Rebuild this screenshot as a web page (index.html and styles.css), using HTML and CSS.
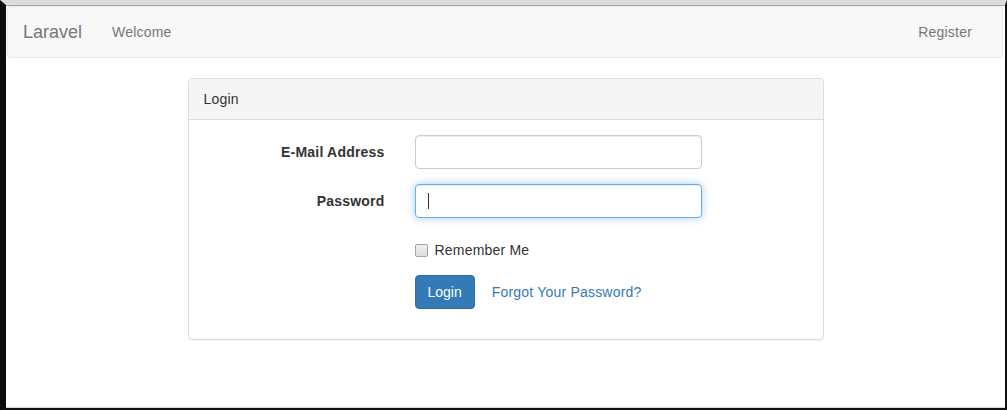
FILE: index.html
```html
<!DOCTYPE html>
<html lang="en">
<head>
    <meta charset="UTF-8">
    <meta name="viewport" content="width=device-width, initial-scale=1.0">
    <title>Laravel</title>

    <link rel="stylesheet" href="styles.css">
</head>
<body>

<div class="frame">
    <nav class="navbar">
        <a class="brand" href="#">Laravel</a>
        <a class="nav-link" href="#">Welcome</a>
        <a class="nav-link nav-right" href="#">Register</a>
    </nav>

    <div class="panel">
        <div class="panel-heading">Login</div>
        <div class="panel-body">
            <form class="login-form">
                <label class="form-label" for="email">E-Mail Address</label>
                <input type="email" id="email" class="form-control">

                <label class="form-label" for="password">Password</label>
                <div class="input-wrap">
                    <input type="password" id="password" class="form-control focused">
                    <span class="caret"></span>
                </div>

                <label class="checkbox">
                    <input type="checkbox" name="remember"> Remember Me
                </label>

                <div class="actions">
                    <button type="button" class="btn-primary">Login</button>
                    <a class="btn-link" href="#">Forgot Your Password?</a>
                </div>
            </form>
        </div>
    </div>
</div>

</body>
</html>
```

FILE: styles.css
```css
html, body {
    margin: 0;
    height: 100%;
}

body {
    font-family: 'Liberation Sans', Arial, sans-serif;
    font-size: 14px;
    line-height: 20px;
    letter-spacing: 0.2px;
    color: #333;
    background: #fff;
}

.frame {
    box-sizing: border-box;
    height: 410px;
    border-left: 6px solid #0d0d0d;
    border-right: 2px solid #111;
    border-top: 5px solid #dcdcdc;
    border-bottom: 2px solid #111;
    background: #fff;
    box-shadow: inset 0 1px 0 #a6a6a6, inset 0 -1px 0 #d9d9d9;
}

.navbar {
    display: flex;
    align-items: center;
    height: 50px;
    margin: 1px 2px 20px 1px;
    border: 1px solid #e7e7e7;
    border-radius: 4px;
    background: #f8f8f8;
}

.navbar a {
    text-decoration: none;
    color: #777;
}

.brand {
    padding: 0 15px;
    font-size: 18px;
    line-height: 20px;
    letter-spacing: 0;
}

.nav-link {
    padding: 0 15px;
}

.nav-right {
    margin-left: auto;
    margin-right: 15px;
}

.panel {
    width: 636px;
    margin: 0 auto;
    box-sizing: border-box;
    border: 1px solid #ddd;
    border-radius: 4px;
    box-shadow: 0 1px 1px rgba(0, 0, 0, 0.05);
}

.panel-heading {
    padding: 10px 15px;
    background: #f5f5f5;
    border-bottom: 1px solid #ddd;
    border-radius: 3px 3px 0 0;
}

.panel-body {
    padding: 15px;
}

.login-form {
    display: grid;
    grid-template-columns: 181px 287px;
    column-gap: 30px;
    row-gap: 15px;
    align-items: center;
}

.form-label {
    text-align: right;
    font-weight: bold;
}

.form-control {
    box-sizing: border-box;
    width: 287px;
    height: 34px;
    padding: 6px 12px;
    font: inherit;
    border: 1px solid #ccc;
    border-radius: 4px;
    box-shadow: inset 0 1px 1px rgba(0, 0, 0, 0.075);
    outline: none;
}

.form-control.focused {
    border-color: #66afe9;
    box-shadow: inset 0 1px 1px rgba(0, 0, 0, 0.075), 0 0 8px rgba(102, 175, 233, 0.6);
}

.input-wrap {
    position: relative;
    height: 34px;
}

.caret {
    position: absolute;
    left: 13px;
    top: 9px;
    width: 1px;
    height: 16px;
    background: #333;
}

.checkbox {
    grid-column: 2;
    display: flex;
    align-items: center;
    padding-top: 7px;
    min-height: 20px;
}

.checkbox input {
    appearance: none;
    width: 13px;
    height: 13px;
    margin: 0 7px 0 0;
    border: 1px solid #a5a5a5;
    border-radius: 2px;
    background: linear-gradient(#f0f0f0, #dcdcdc);
}

.actions {
    grid-column: 2;
    display: flex;
    align-items: center;
    gap: 17px;
    padding-bottom: 15px;
}

.btn-primary {
    height: 34px;
    padding: 6px 12px;
    font: inherit;
    color: #fff;
    background: #337ab7;
    border: 1px solid #2e6da4;
    border-radius: 4px;
}

.btn-link {
    color: #337ab7;
    text-decoration: none;
}
```
